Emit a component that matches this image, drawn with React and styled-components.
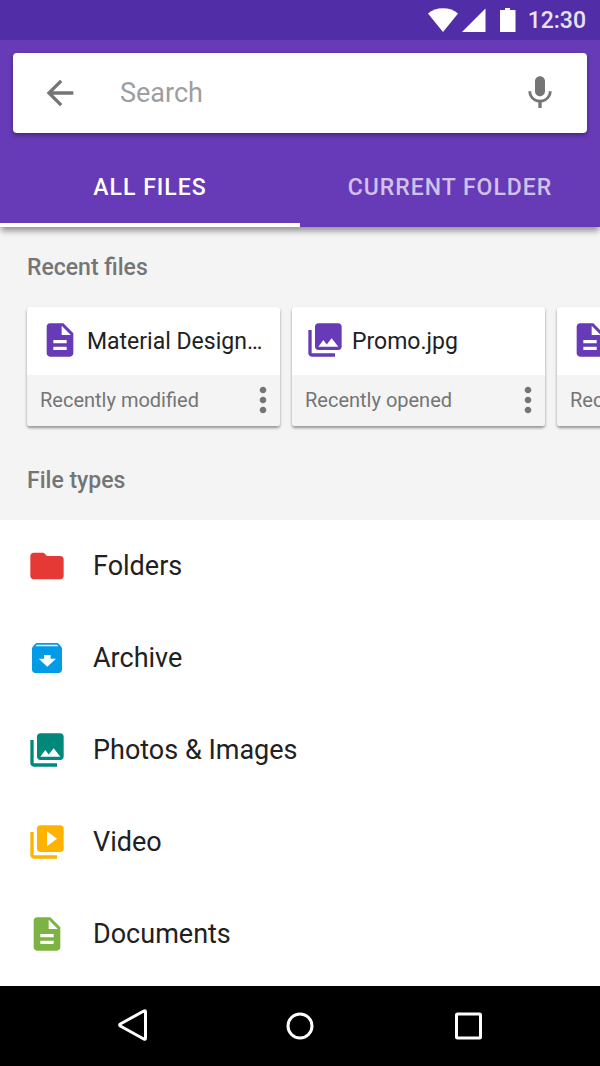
import React from "react";
import styled, { createGlobalStyle } from "styled-components";

const GlobalStyle = createGlobalStyle`
  *, *::before, *::after { box-sizing: border-box; }
  html, body, #root { height: 100%; }
  body {
    margin: 0;
    background: #fff;
    color: #212121;
    font-family: Roboto, "Liberation Sans", sans-serif;
  }
  button { font: inherit; border: 0; padding: 0; background: none; cursor: pointer; }
  svg { display: block; flex: none; }
`;

const Screen = styled.div`
  display: flex;
  flex-direction: column;
  min-height: 100%;
  overflow: hidden;
`;

const StatusBar = styled.div`
  display: flex;
  align-items: center;
  justify-content: flex-end;
  height: 40px;
  padding-right: 14px;
  background: #512da8;
  color: #fff;
`;

const StatusIcon = styled.svg`
  margin-right: ${(p) => p.$gap}px;
  fill: #fff;
`;

const Clock = styled.time`
  padding-top: 2px;
  font-size: 23px;
  font-weight: 500;
  line-height: 40px;
  opacity: 0.87;
`;

const Header = styled.header`
  position: relative;
  padding: 13px 0 0;
  background: #673ab7;
  box-shadow: 0 5px 6px -1px rgba(0, 0, 0, 0.4);
`;

const SearchBar = styled.form`
  display: flex;
  align-items: center;
  height: 80px;
  margin: 0 13px;
  padding: 0 27px;
  border-radius: 4px;
  background: #fff;
  box-shadow: 0 2px 4px rgba(0, 0, 0, 0.35);
`;

const IconButton = styled.button`
  display: flex;
  color: ${(p) => p.$color || "#757575"};
`;

const SearchInput = styled.input`
  flex: 1;
  min-width: 0;
  margin: 0 0 0 40px;
  padding: 0;
  border: 0;
  outline: 0;
  background: none;
  color: #212121;
  font: 400 27px/40px Roboto, "Liberation Sans", sans-serif;
  &::placeholder { color: #9e9e9e; opacity: 1; }
`;

const Tabs = styled.div`
  display: grid;
  grid-template-columns: 1fr 1fr;
  padding-top: 14px;
`;

const Tab = styled.button.attrs({ role: "tab", type: "button" })`
  && {
    height: 80px;
    box-shadow: inset 0 -4px ${(p) => (p.$active ? "#fff" : "transparent")};
    color: ${(p) => (p.$active ? "#fff" : "rgba(255, 255, 255, 0.7)")};
    font-size: 23px;
    font-weight: 500;
    letter-spacing: 1px;
    text-transform: uppercase;
  }
`;

const Files = styled.section`
  background: #f4f4f4;
`;

const SectionTitle = styled.h2`
  margin: 0;
  padding: 2px 27px 0;
  font-size: 23px;
  font-weight: 500;
  line-height: 78px;
  color: #757575;
`;

const TypesTitle = styled(SectionTitle)`
  padding-top: 16px;
`;

const Cards = styled.div`
  display: flex;
  gap: 12px;
  padding-left: 27px;
`;

const Card = styled.article`
  flex: 0 0 253px;
  min-width: 0;
  border-radius: 3px;
  background: #fff;
  box-shadow: 0 2px 3px rgba(0, 0, 0, 0.4);
`;

const CardHead = styled.div`
  display: flex;
  align-items: center;
  gap: 7px;
  height: 68px;
  padding: 0 12px 2px 13px;
`;

const CardTitle = styled.h3`
  flex: 1;
  min-width: 0;
  margin: 0;
  padding-top: 4px;
  overflow: hidden;
  white-space: nowrap;
  text-overflow: ellipsis;
  font-size: 23px;
  font-weight: 400;
  line-height: 40px;
`;

const CardFoot = styled.div`
  display: flex;
  align-items: center;
  justify-content: space-between;
  height: 51px;
  padding: 0 0 2px 13px;
  border-radius: 0 0 3px 3px;
  background: #f4f4f4;
  font-size: 20px;
  line-height: 24px;
  color: #757575;
  white-space: nowrap;
`;

const MoreButton = styled(IconButton)`
  margin-right: -3px;
`;

const TypeList = styled.ul`
  flex: 1;
  margin: 0;
  padding: 0 0 6px;
  list-style: none;
  background: #fff;
`;

const TypeButton = styled.button`
  && {
    display: flex;
    align-items: center;
    gap: 26px;
    width: 100%;
    height: 92px;
    padding: 0 27px;
    color: #212121;
    font-size: 27px;
    text-align: left;
  }
`;

const NavBar = styled.nav`
  display: flex;
  align-items: center;
  justify-content: center;
  gap: 128px;
  height: 80px;
  background: #000;
`;

const PATHS = {
  back: "M20 11H7.83l5.59-5.59L12 4l-8 8 8 8 1.41-1.41L7.83 13H20v-2z",
  mic: "M12 14c1.66 0 2.99-1.34 2.99-3L15 5c0-1.66-1.34-3-3-3S9 3.34 9 5v6c0 1.66 1.34 3 3 3zm5.3-3c0 3-2.54 5.1-5.3 5.1S6.7 14 6.7 11H5c0 3.41 2.72 6.23 6 6.72V21h2v-3.28c3.28-.48 6-3.3 6-6.72h-1.7z",
  more: "M12 8c1.1 0 2-.9 2-2s-.9-2-2-2-2 .9-2 2 .9 2 2 2zm0 2c-1.1 0-2 .9-2 2s.9 2 2 2 2-.9 2-2-.9-2-2-2zm0 6c-1.1 0-2 .9-2 2s.9 2 2 2 2-.9 2-2-.9-2-2-2z",
  document: "M14 2H6c-1.1 0-1.99.9-1.99 2L4 20c0 1.1.89 2 1.99 2H18c1.1 0 2-.9 2-2V8l-6-6zm2 16H8v-2h8v2zm0-4H8v-2h8v2zm-3-5V3.5L18.5 9H13z",
  image: "M22 16V4c0-1.1-.9-2-2-2H8c-1.1 0-2 .9-2 2v12c0 1.1.9 2 2 2h12c1.1 0 2-.9 2-2zm-11-4l2.03 2.71L16 11l4 5H8l3-4zM2 6v14c0 1.1.9 2 2 2h14v-2H4V6H2z",
  folder: "M10 4H4c-1.1 0-1.99.9-1.99 2L2 18c0 1.1.9 2 2 2h16c1.1 0 2-.9 2-2V8c0-1.1-.9-2-2-2h-8l-2-2z",
  archive: "M20.54 5.23l-1.39-1.68C18.88 3.21 18.47 3 18 3H6c-.47 0-.88.21-1.16.55L3.46 5.23C3.17 5.57 3 6.02 3 6.5V19c0 1.1.9 2 2 2h14c1.1 0 2-.9 2-2V6.5c0-.48-.17-.93-.46-1.27zM12.2 17.2L7 12.4h3.2v-2.2h4v2.2h3.2L12.2 17.2zM5.12 5l.81-1h12l.94 1H5.12z",
  video: "M4 6H2v14c0 1.1.9 2 2 2h14v-2H4V6zm16-4H8c-1.1 0-2 .9-2 2v12c0 1.1.9 2 2 2h12c1.1 0 2-.9 2-2V4c0-1.1-.9-2-2-2zm-8 12.5v-9l6 4.5-6 4.5z",
};

function Icon({ name, color = "currentColor" }) {
  return (
    <svg width="40" height="40" viewBox="0 0 24 24" fill={color} aria-hidden="true">
      <path d={PATHS[name]} />
    </svg>
  );
}

const RECENT = [
  { icon: "document", title: "Material Design…", note: "Recently modified" },
  { icon: "image", title: "Promo.jpg", note: "Recently opened" },
  { icon: "document", title: "Notes", note: "Recently opened" },
];

const TYPES = [
  { icon: "folder", color: "#e53935", label: "Folders" },
  { icon: "archive", color: "#039be5", label: "Archive" },
  { icon: "image", color: "#00897b", label: "Photos & Images" },
  { icon: "video", color: "#ffb300", label: "Video" },
  { icon: "document", color: "#7cb342", label: "Documents" },
];

export default function App() {
  return (
    <>
      <GlobalStyle />
      <Screen>
        <StatusBar>
          <StatusIcon $gap={4} width="30" height="24" viewBox="0 0 30 24">
            <path d="M0 5.5C4 2.2 9 .3 15 .3s11 1.9 15 5.2L15 24z" />
          </StatusIcon>
          <StatusIcon $gap={14} width="24" height="24" viewBox="0 0 24 24">
            <path d="M0 24L23.5.5V24z" />
          </StatusIcon>
          <StatusIcon $gap={12} width="16" height="24" viewBox="0 0 16 24">
            <path d="M0 2h5V0h5v2h5.5v22H0z" />
          </StatusIcon>
          <Clock>12:30</Clock>
        </StatusBar>

        <Header>
          <SearchBar role="search" onSubmit={(e) => e.preventDefault()}>
            <IconButton type="button" aria-label="Back"><Icon name="back" /></IconButton>
            <SearchInput type="text" placeholder="Search" aria-label="Search" />
            <IconButton type="button" aria-label="Voice search"><Icon name="mic" /></IconButton>
          </SearchBar>
          <Tabs role="tablist">
            <Tab $active aria-selected="true">All files</Tab>
            <Tab aria-selected="false">Current folder</Tab>
          </Tabs>
        </Header>

        <Files>
          <SectionTitle>Recent files</SectionTitle>
          <Cards>
            {RECENT.map((file) => (
              <Card key={file.title}>
                <CardHead>
                  <Icon name={file.icon} color="#673ab7" />
                  <CardTitle>{file.title}</CardTitle>
                </CardHead>
                <CardFoot>
                  {file.note}
                  <MoreButton type="button" aria-label={`More options for ${file.title}`}>
                    <Icon name="more" />
                  </MoreButton>
                </CardFoot>
              </Card>
            ))}
          </Cards>
          <TypesTitle>File types</TypesTitle>
        </Files>

        <TypeList>
          {TYPES.map((type) => (
            <li key={type.label}>
              <TypeButton type="button">
                <Icon name={type.icon} color={type.color} />
                {type.label}
              </TypeButton>
            </li>
          ))}
        </TypeList>

        <NavBar aria-label="System navigation">
          <IconButton type="button" aria-label="Back" $color="#fff">
            <svg width="40" height="40" viewBox="0 0 40 40" fill="none" stroke="currentColor" strokeWidth="3" strokeLinejoin="round">
              <path d="M33.5 6Q33.500 4 31.800 5L8.300 18Q7 19 8.300 20L31.800 33Q33.500 34 33.500 32z" />
            </svg>
          </IconButton>
          <IconButton type="button" aria-label="Home" $color="#fff">
            <svg width="40" height="40" viewBox="0 0 40 40" fill="none" stroke="currentColor" strokeWidth="3">
              <circle cx="20" cy="20" r="12" />
            </svg>
          </IconButton>
          <IconButton type="button" aria-label="Recent apps" $color="#fff">
            <svg width="40" height="40" viewBox="0 0 40 40" fill="none" stroke="currentColor" strokeWidth="3">
              <rect x="8.5" y="8" width="24" height="24" rx="1" />
            </svg>
          </IconButton>
        </NavBar>
      </Screen>
    </>
  );
}
